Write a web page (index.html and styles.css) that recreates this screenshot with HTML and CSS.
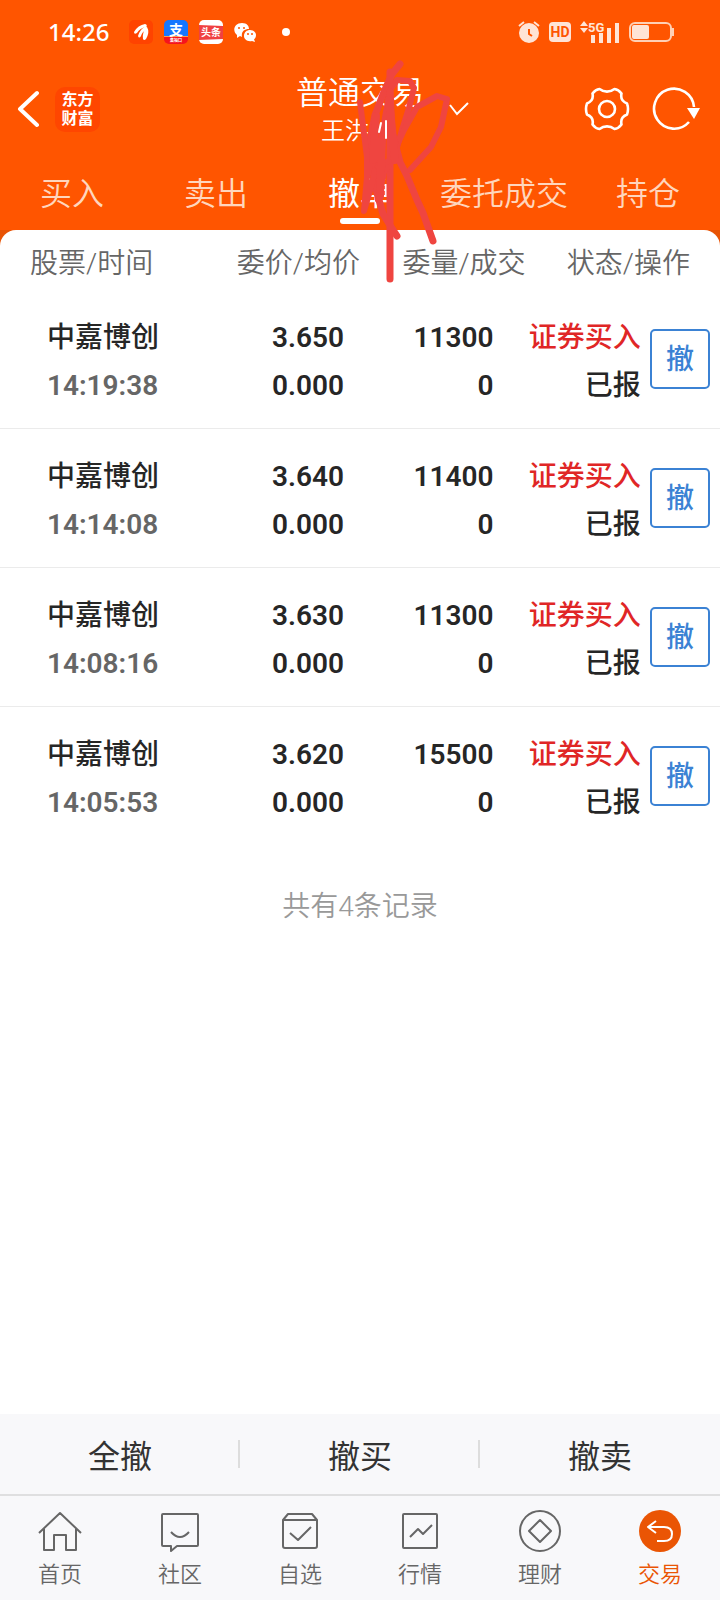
FILE: index.html
```html
<!DOCTYPE html>
<html lang="zh-CN">
<head>
<meta charset="utf-8">
<meta name="viewport" content="width=device-width, initial-scale=1">
<title>普通交易</title>
<link rel="stylesheet" href="styles.css">
</head>
<body>
<div class="app">
  <header class="header">
    <div class="status">
      <time class="clock">14:26</time>
      <div class="notices">
        <svg width="24" height="24" viewBox="0 0 24 24"><rect width="24" height="24" rx="5" fill="#ff4300"/><g fill="#fff"><path d="M5 12Q9 5 16 4Q19 5 17 7Q11 8 8 13Q5 15 5 12Z"/><path d="M9 16Q11 9 17 6Q19 8 17 10Q13 12 12 16Q10 19 9 16Z"/><path d="M14 19Q13 12 18 7Q21 12 17 19Q15 21 14 19Z"/></g></svg>
        <svg width="24" height="24" viewBox="0 0 24 24"><clipPath id="tile"><rect width="24" height="24" rx="5"/></clipPath><g clip-path="url(#tile)"><path fill="#1677ff" d="M0 0h24v17H0z"/><path fill="#f5141c" d="M0 17h24v7H0z"/><path d="M0 16.500h24" stroke="#ff9a4d" stroke-width="1"/></g><text class="glyph" x="12" y="15" font-size="14">支</text><text class="glyph" x="12" y="22" font-size="4">集福口</text></svg>
        <svg width="24" height="24" viewBox="0 0 24 24"><rect width="24" height="24" rx="5" fill="#fff"/><path fill="#f04142" d="M0 5l24 1v13l-24 1z"/><text class="glyph" x="12" y="16" font-size="10">头条</text></svg>
        <svg width="24" height="24" viewBox="0 0 24 24"><path fill="#fff" d="M8 3c5 0 7 3 7 6-5 0-8 3-7 8l-2-1-3 2v-3C-2 11 0 3 8 3Z"/><path fill="#fff" d="M16 10c4 0 6 3 6 5 0 2-1 4-2 4l1 3-3-1c-5 1-8-2-8-5 0-4 3-6 6-6Z"/><g fill="#ff5500"><circle cx="5" cy="8" r="1"/><circle cx="10" cy="8" r="1"/><circle cx="14" cy="14" r="1"/><circle cx="18" cy="14" r="1"/></g></svg>
        <i class="dot"></i>
      </div>
      <div class="signals">
        <svg width="22" height="24" viewBox="0 0 22 24"><circle cx="11" cy="13" r="10" fill="#ffe4d6"/><path d="M1 6l5-4M16 2l5 4" stroke="#ffe4d6" stroke-width="2"/><path d="M11 9v5l3 2" fill="none" stroke="#ff5500" stroke-width="2"/></svg>
        <svg width="22" height="20" viewBox="0 0 22 20"><rect width="22" height="20" rx="4" fill="#ffe4d6"/><text class="hd" x="11" y="15">HD</text></svg>
        <svg width="40" height="24" viewBox="0 0 40 24"><g fill="#ffe4d6"><path d="M0 6l4-5 4 5zM0 8h8l-4 5z"/><path d="M11 15h4v8h-4zM19 13h4v10h-4zM27 8h4v15h-4zM35 3h4v20h-4z"/></g><text class="net" x="8" y="12">5G</text></svg>
        <svg width="46" height="22" viewBox="0 0 46 22"><rect x="1" y="2" width="41" height="18" rx="5" fill="none" stroke="#ffd0b5" stroke-width="2"/><rect x="3" y="4" width="17" height="14" rx="2" fill="#ffe4d6"/><path d="M44 7v8" stroke="#ffd0b5" stroke-width="2"/></svg>
      </div>
    </div>

    <div class="titlebar">
      <div class="lead">
        <button class="icon" aria-label="返回"><svg width="22" height="38" viewBox="0 0 22 38"><path d="M20 3L3 19l17 16" fill="none" stroke="#fff" stroke-width="4" stroke-linecap="round" stroke-linejoin="round"/></svg></button>
        <a class="brand" href="#">东方<br>财富</a>
      </div>
      <div class="title">
        <h1>普通交易</h1>
        <p>王洪</p>
      </div>
      <div class="tools">
        <button class="icon" aria-label="切换账户"><svg width="20" height="14" viewBox="0 0 20 14"><path d="M1 3l7 9L19 1" fill="none" stroke="#fff" stroke-width="2"/></svg></button>
        <button class="icon push" aria-label="设置"><svg width="46" height="46" viewBox="-23 -23 46 46"><g fill="none" stroke="#fff" stroke-width="2.600" stroke-linejoin="round"><path d="M20 5.500C15 7.500 13.500 11 14.500 15.500Q11.500 19.500 7.500 20C3 16.500-3 16.500-7.500 20Q-11.500 19.500-14.500 15.500C-13.500 11-15 7.500-20 5.500Q-22 0-20-5.500C-15-7.500-13.500-11-14.500-15.500Q-11.500-19.500-7.500-20C-3-16.500 3-16.500 7.500-20Q11.500-19.500 14.500-15.500C13.500-11 15-7.500 20-5.500Q22 0 20 5.500Z"/><circle r="8"/></g></svg></button>
        <button class="icon" aria-label="刷新"><svg width="48" height="46" viewBox="-22 -23 48 46"><path d="M15 13A20 20 0 1 1 20-2" fill="none" stroke="#fff" stroke-width="2.600"/><path d="M13-1h13l-6 11z" fill="#fff"/></svg></button>
      </div>
    </div>

    <nav class="tabs">
      <a href="#">买入</a>
      <a href="#">卖出</a>
      <a href="#" class="active" aria-current="page">撤单</a>
      <a href="#">委托成交</a>
      <a href="#">持仓</a>
    </nav>

    <svg class="scribble" width="104" height="228" viewBox="350 58 104 228" fill="none" stroke="#ef4540" stroke-linecap="round" stroke-linejoin="round">
      <path stroke-width="7" d="M390 72V279"/>
      <path stroke-width="7" d="M400 64L392 74L384 92L375 115L370 140L372 167L377 193L383 214L391 227L397 236"/>
      <path stroke-width="6" d="M360 102L362 118L367 157L367 177L364 211L372 184L380 145L390 90L397 80L410 81L414 88L409 108L402 130L394 158L384 172L378 200"/>
      <path stroke-width="6" d="M410 170L431 147L441 127L447 99L437 96L417 107L404 130L390 160L378 167"/>
      <path stroke-width="7" d="M390 92L392 132L400 162L407 176L417 200L423 213L433 241"/>
      <path stroke-width="8" d="M376 116L373 160L382 140L380 196M389 100L395 160"/>
      <path d="M381 123l-2 9M386 121v17" stroke="#fff" stroke-width="2"/>
    </svg>
  </header>

  <main class="sheet">
    <table class="orders">
      <colgroup><col class="c-name"><col class="c-price"><col class="c-qty"><col class="c-state"><col class="c-act"></colgroup>
      <thead>
        <tr><th class="first">股票/时间</th><th>委价/均价</th><th>委量/成交</th><th class="last" colspan="2">状态/操作</th></tr>
      </thead>
      <tbody>
        <tr><td class="name">中嘉博创<span>14:19:38</span></td><td class="price">3.650<span>0.000</span></td><td class="qty">11300<span>0</span></td><td class="state"><em>证券买入</em><span>已报</span></td><td class="act"><button>撤</button></td></tr>
        <tr><td class="name">中嘉博创<span>14:14:08</span></td><td class="price">3.640<span>0.000</span></td><td class="qty">11400<span>0</span></td><td class="state"><em>证券买入</em><span>已报</span></td><td class="act"><button>撤</button></td></tr>
        <tr><td class="name">中嘉博创<span>14:08:16</span></td><td class="price">3.630<span>0.000</span></td><td class="qty">11300<span>0</span></td><td class="state"><em>证券买入</em><span>已报</span></td><td class="act"><button>撤</button></td></tr>
        <tr><td class="name">中嘉博创<span>14:05:53</span></td><td class="price">3.620<span>0.000</span></td><td class="qty">15500<span>0</span></td><td class="state"><em>证券买入</em><span>已报</span></td><td class="act"><button>撤</button></td></tr>
      </tbody>
    </table>
    <p class="count">共有4条记录</p>
  </main>

  <div class="actions">
    <button>全撤</button>
    <button>撤买</button>
    <button>撤卖</button>
  </div>

  <nav class="dock">
    <a href="#"><svg width="44" height="44" viewBox="0 0 44 44"><path d="M1 23L22 3l21 20M6 19v21h10V25h12v15h10V19"/></svg>首页</a>
    <a href="#"><svg width="44" height="44" viewBox="0 0 44 44"><path d="M5 4h34q1 0 1 1v30q0 1-1 1H19l-6 5v-5H5q-1 0-1-1V5q0-1 1-1ZM13 22q9 10 18 0"/></svg>社区</a>
    <a href="#"><svg width="44" height="44" viewBox="0 0 44 44"><path d="M5 10L10 4h24l5 6v26q0 2-2 2H7q-2 0-2-2ZM5 10h34M12 23l8 7 13-13"/></svg>自选</a>
    <a href="#"><svg width="44" height="44" viewBox="0 0 44 44"><rect x="5" y="4" width="34" height="34" rx="1"/><path d="M12 27l8-8 5 5 9-9"/></svg>行情</a>
    <a href="#"><svg width="44" height="44" viewBox="0 0 44 44"><circle cx="22" cy="21" r="20"/><path d="M22 10l11 11-11 11-11-11z"/></svg>理财</a>
    <a href="#" class="active" aria-current="page"><svg width="44" height="44" viewBox="0 0 44 44"><circle class="disc" cx="22" cy="21" r="21"/><path d="M18 11l-8 6 8 6M10 17h16q8 0 8 7t-8 7h-7"/></svg>交易</a>
  </nav>
</div>
</body>
</html>
```

FILE: styles.css
```css
* { box-sizing: border-box; }

body {
  margin: 0;
  background: #fff;
  color: #262626;
  font-family: Roboto, "Noto Sans CJK SC", sans-serif;
}

h1, p { margin: 0; font-weight: 350; }
a { color: inherit; text-decoration: none; }
button { padding: 0; border: 0; background: none; color: inherit; font: inherit; }
svg { display: block; }

.app { display: flex; flex-direction: column; min-height: 100vh; }

.header { position: relative; background: #ff5500; color: #fff; }

.status { display: flex; align-items: center; height: 64px; padding: 0 45px 0 48px; }
.clock { font: 500 24px/32px "Noto Sans", sans-serif; }
.notices, .signals { display: flex; align-items: center; gap: 11px; }
.notices { margin-left: 20px; }
.signals { gap: 9px; margin-left: auto; }
.dot { width: 8px; height: 8px; margin-left: 13px; border-radius: 50%; background: #fff; }
.glyph { fill: #fff; font-family: "Noto Sans CJK SC", sans-serif; font-weight: 700; text-anchor: middle; }
.hd { fill: #ff5500; font: 700 14px Roboto, sans-serif; text-anchor: middle; }
.net { fill: #ffe4d6; font: 700 13px Roboto, sans-serif; }

.titlebar { display: grid; grid-template-columns: 1fr auto 1fr; align-items: center; height: 90px; }
.lead { display: flex; align-items: center; gap: 16px; padding-left: 17px; }
.brand {
  width: 45px;
  height: 45px;
  padding-top: 3px;
  border-radius: 10px;
  background: #ff4600;
  font-size: 16px;
  font-weight: 700;
  line-height: 19px;
  text-align: center;
}
.title { display: flex; flex-direction: column; padding-top: 4px; }
.title h1 { font-size: 32px; line-height: 40px; }
.title p { padding-left: 25px; font-size: 24px; line-height: 36px; }
.tools { display: flex; align-items: center; gap: 22px; padding: 0 20px 0 25px; }
.push { margin-left: auto; }

.tabs { display: grid; grid-template-columns: repeat(5, 1fr); height: 76px; }
.tabs a {
  display: flex;
  flex-direction: column;
  align-items: center;
  padding-top: 16px;
  color: #ffd6bd;
  font-size: 32px;
  font-weight: 350;
  line-height: 48px;
}
.tabs .active { color: #fff; font-weight: 400; }
.tabs .active::after { content: ""; width: 40px; height: 6px; border-radius: 3px; background: #fff; }

/* Hand-drawn mark lying over the title and the tabs */
.scribble { position: absolute; top: 58px; left: calc(50% - 10px); z-index: 1; pointer-events: none; }

.sheet { flex: 1; background: linear-gradient(#e85304 20px, #fff 20px); }
.orders {
  width: 100%;
  border-collapse: separate;
  border-spacing: 0;
  border-radius: 16px 16px 0 0;
  background: #fff;
  table-layout: fixed;
  font-size: 28px;
  line-height: 48px;
}
.c-name, .c-price { width: 25%; }
.c-qty { width: 23%; }
.c-state { width: 16%; }
.c-act { width: 11%; }

th { padding: 10px 0 2px; color: #666; font-weight: 350; text-align: right; white-space: nowrap; }
.first { padding-left: 30px; text-align: left; }
.last { padding-right: 30px; }

td { padding: 24px 0 18px; border-bottom: 1px solid #ebebeb; font-weight: 500; text-align: right; white-space: nowrap; }
tbody tr:last-child td { border-bottom-color: transparent; }
td span, td em { display: block; font-style: normal; }
.name { padding-left: 47px; text-align: left; }
.name span { color: #666; }
.name span, .price, .qty { font-weight: 600; }
.price { padding-right: 16px; }
.qty { padding-right: 32px; }
.state em { color: #e02626; }
td.act { padding: 20px 10px 20px 0; }
.act button {
  width: 60px;
  height: 60px;
  padding-top: 2px;
  border: 2px solid #3b82d4;
  border-radius: 5px;
  color: #3b82d4;
  vertical-align: middle;
}

.count { padding: 37px 0 33px; color: #999; font-size: 28px; line-height: 48px; text-align: center; }

.actions { display: grid; grid-template-columns: repeat(3, 1fr); height: 80px; background: #f8f8fa; }
.actions button {
  display: flex;
  align-items: center;
  justify-content: center;
  color: #333;
  font-size: 32px;
  background: linear-gradient(#ddd, #ddd) right center / 2px 28px no-repeat;
}
.actions button:last-child { background: none; }

.dock { display: grid; grid-template-columns: repeat(6, 1fr); height: 106px; border-top: 2px solid #dfdfe0; background: #f8f8fa; }
.dock a {
  display: flex;
  flex-direction: column;
  align-items: center;
  gap: 5px;
  padding-top: 14px;
  color: #666;
  font-size: 22px;
  font-weight: 350;
  line-height: 32px;
}
.dock svg { fill: none; stroke: #666; stroke-width: 2; stroke-linejoin: round; }
.dock .active { color: #ea5504; }
.dock .active svg { stroke: #fff; }
.dock .disc { fill: #ea5504; stroke: none; }
```
